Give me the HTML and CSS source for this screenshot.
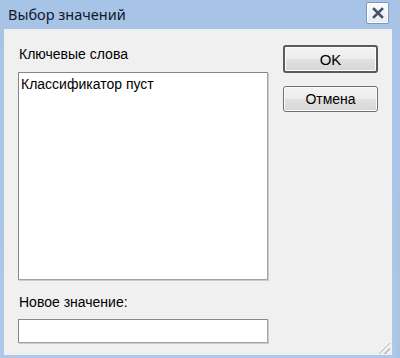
FILE: index.html
```html
<!DOCTYPE html>
<html lang="ru">
<head>
    <meta charset="UTF-8">
    <title>Выбор значений</title>
    <link rel="stylesheet" href="styles.css">
</head>
<body>
    <div class="window">
        <div class="titlebar">
            <span class="title">Выбор значений</span>
            <button class="close-btn" aria-label="Закрыть">
                <svg width="12" height="12" viewBox="0 0 12 12">
                    <path d="M2 2 L10 10 M10 2 L2 10" stroke="#46546a" stroke-width="2.6" stroke-linecap="square"/>
                </svg>
            </button>
        </div>
        <div class="client">
            <div class="main-col">
                <label class="label">Ключевые слова</label>
                <div class="listbox">
                    <div class="list-item">Классификатор пуст</div>
                </div>
                <label class="label label-new">Новое значение:</label>
                <input class="textbox" type="text">
            </div>
            <div class="buttons">
                <button class="btn btn-default">OK</button>
                <button class="btn">Отмена</button>
            </div>
            <div class="grip"></div>
        </div>
    </div>
</body>
</html>
```

FILE: styles.css
```css
* {
    margin: 0;
    padding: 0;
    box-sizing: border-box;
}

body {
    width: 400px;
    height: 358px;
    overflow: hidden;
    background: #a9c5e6;
    font-family: "Liberation Sans", Arial, sans-serif;
    font-size: 14px;
    color: #000;
}

.window {
    width: 396px;
    height: 358px;
    background: linear-gradient(180deg, #a7c3e6 0%, #adc8e8 100%);
    padding: 0 4px 3px 4px;
    display: flex;
    flex-direction: column;
}

.titlebar {
    height: 29px;
    display: flex;
    align-items: center;
    justify-content: space-between;
    padding: 0 3px 0 4px;
}

.title {
    font-family: "Noto Sans", "Open Sans", sans-serif;
    font-size: 14.5px;
    color: #0f1a2a;
    margin-top: -2px;
}

.close-btn {
    width: 23px;
    height: 22px;
    margin-top: -3px;
    border: 1px solid #8298b8;
    border-radius: 2px;
    background: linear-gradient(180deg, #fbfcfd 0%, #e6ebf1 100%);
    box-shadow: inset 0 0 0 1px #ffffff;
    display: flex;
    align-items: center;
    justify-content: center;
}

.client {
    position: relative;
    flex: 1;
    background: #f0f0f0;
    display: flex;
    padding: 16px 14px 0 14px;
}

.main-col {
    width: 250px;
    display: flex;
    flex-direction: column;
    padding-top: 2px;
}

.label {
    line-height: 15px;
    padding-left: 1px;
}

.listbox {
    margin-top: 10px;
    height: 208px;
    background: #fff;
    border: 1px solid #828790;
    border-right-color: #a0a4ab;
    border-bottom-color: #a0a4ab;
    box-shadow: 1px 1px 0 #c8ccd2;
    padding: 4px 2px;
}

.list-item {
    line-height: 15px;
}

.label-new {
    margin-top: 15px;
}

.textbox {
    margin-top: 9px;
    height: 24px;
    width: 250px;
    border: 1px solid #828790;
    border-right-color: #a0a4ab;
    border-bottom-color: #a0a4ab;
    box-shadow: 1px 1px 0 #c8ccd2;
    background: #fff;
}

.buttons {
    margin-left: 15px;
    display: flex;
    flex-direction: column;
    gap: 13px;
}

.btn {
    width: 95px;
    height: 26px;
    font-family: "Liberation Sans", Arial, sans-serif;
    font-size: 14px;
    color: #000;
    border: 1px solid #707070;
    border-radius: 3px;
    background: linear-gradient(180deg, #f4f4f4 0%, #ececec 50%, #e0e0e0 51%, #d8d8d8 100%);
    box-shadow: inset 0 0 0 1px #fcfcfc;
}

.btn-default {
    height: 28px;
    border: 2px solid #5a5a5a;
    font-size: 15px;
}

.grip {
    position: absolute;
    right: 2px;
    bottom: 1px;
    width: 13px;
    height: 13px;
    background: repeating-linear-gradient(135deg, transparent 0 2px, #b8b8b8 2px 3px, transparent 3px 4px);
    clip-path: polygon(100% 0, 100% 100%, 0 100%);
}
```
